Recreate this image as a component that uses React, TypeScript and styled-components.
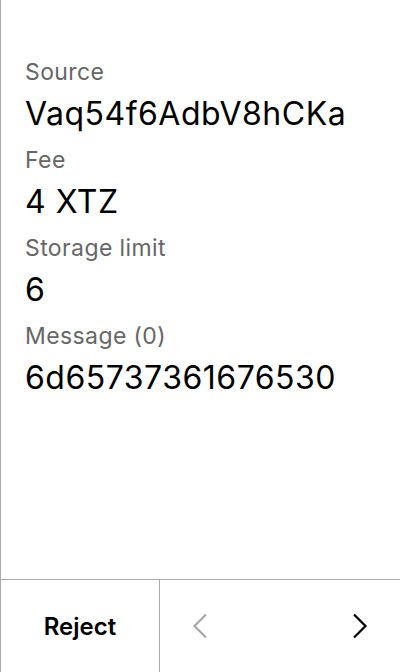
import React from 'react'
import styled, { createGlobalStyle } from 'styled-components'

const GlobalStyle = createGlobalStyle`
    html, body {
        margin: 0;
        padding: 0;
        background: #fff;
    }
    body {
        font-family: Inter, 'Noto Sans', sans-serif;
    }
`

const fields = [
    { label: 'Source', value: 'Vaq54f6AdbV8hCKa' },
    { label: 'Fee', value: '4 XTZ' },
    { label: 'Storage limit', value: '6' },
    { label: 'Message (0)', value: '6d65737361676530' },
]

const Chevron = ({ dir, color }: { dir: 'left' | 'right'; color: string }) => (
    <svg width="16" height="26" viewBox="0 0 16 26" fill="none">
        <path
            d={dir === 'left' ? 'M14 1.5 L2.5 13 L14 24.5' : 'M2 1.5 L13.5 13 L2 24.5'}
            stroke={color}
            strokeWidth="2.2"
        />
    </svg>
)

const App = () => {
    return (
        <Screen>
            <GlobalStyle />
            <Content>
                {fields.map(({ label, value }) => (
                    <Field key={label}>
                        <Label>{label}</Label>
                        <Value>{value}</Value>
                    </Field>
                ))}
            </Content>
            <Footer>
                <RejectButton>Reject</RejectButton>
                <Nav>
                    <NavButton>
                        <Chevron dir="left" color="#a8a8a8" />
                    </NavButton>
                    <NavButton>
                        <Chevron dir="right" color="#000" />
                    </NavButton>
                </Nav>
            </Footer>
        </Screen>
    )
}

export default App

const Screen = styled.div`
    height: 672px;
    width: 400px;
    box-sizing: border-box;
    border-left: 1px solid #aaa;
    display: flex;
    flex-direction: column;
`

const Content = styled.div`
    flex: 1;
    padding: 56px 0 0 24px;
    display: flex;
    flex-direction: column;
    gap: 4px;
`

const Field = styled.div`
    display: flex;
    flex-direction: column;
`

const Label = styled.div`
    font-size: 23px;
    line-height: 32px;
    letter-spacing: 0.4px;
    color: #666;
`

const Value = styled.div`
    font-size: 32px;
    line-height: 52px;
    letter-spacing: 0.5px;
    color: #000;
`

const Footer = styled.div`
    height: 92px;
    border-top: 1px solid #aaa;
    display: grid;
    grid-template-columns: 159px 1fr;
`

const RejectButton = styled.div`
    display: flex;
    align-items: center;
    justify-content: center;
    font-size: 24px;
    font-weight: 600;
    color: #000;
    border-right: 1px solid #aaa;
`

const Nav = styled.div`
    display: flex;
    align-items: center;
    justify-content: space-between;
    padding: 0 32px;
`

const NavButton = styled.div`
    display: flex;
    align-items: center;
`
